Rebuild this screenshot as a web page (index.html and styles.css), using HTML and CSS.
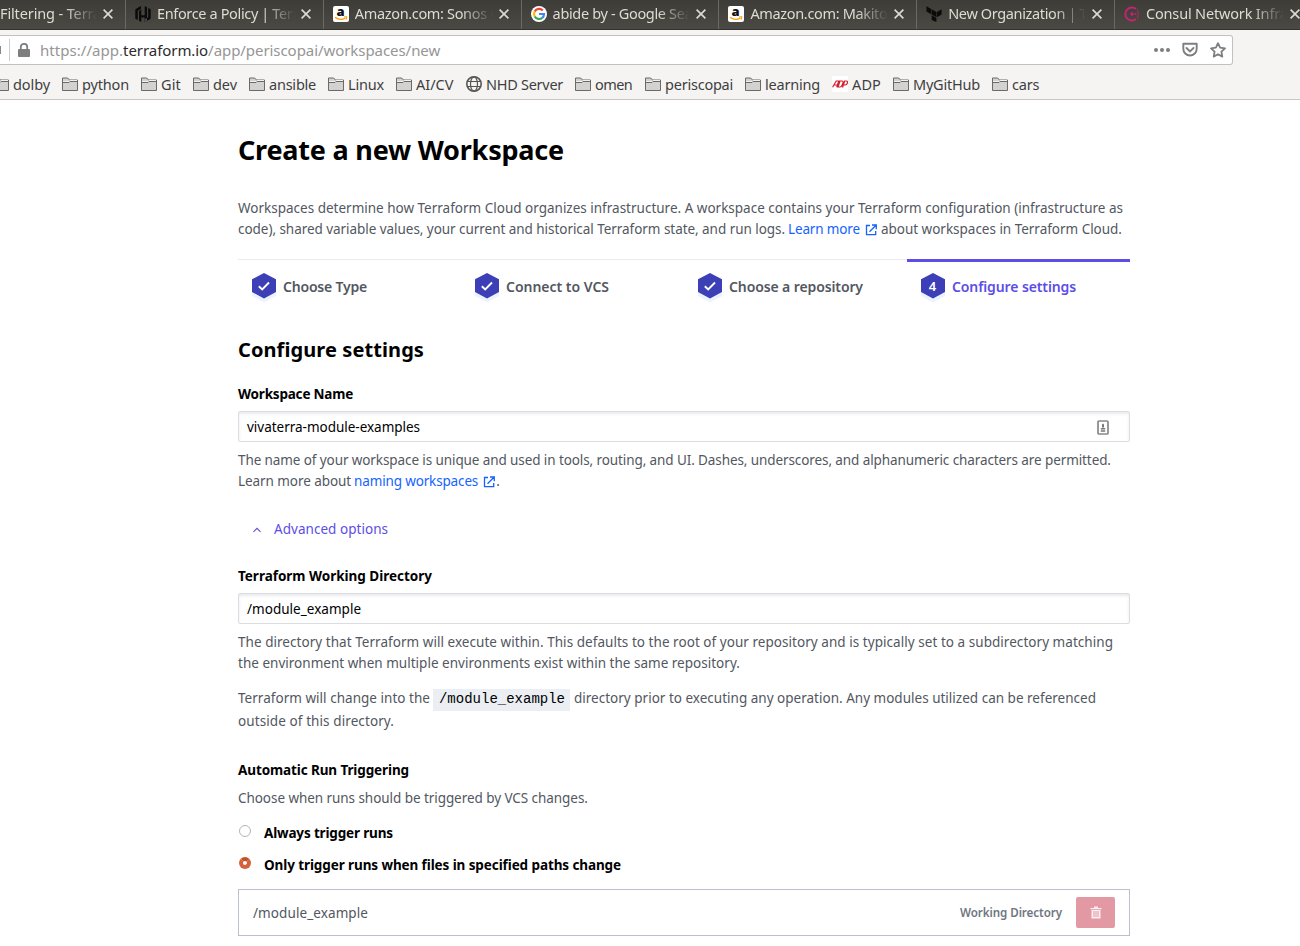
FILE: index.html
```html
<!DOCTYPE html>
<html lang="en">
<head>
<meta charset="utf-8">
<title>Create a new Workspace</title>
<link rel="stylesheet" href="styles.css">
</head>
<body>
<svg class="defs" width="0" height="0" aria-hidden="true">
  <symbol id="folder" viewBox="0 0 16 16"><path d="M.5 14.500v-12.500h5.200l1.800 2h8v10.500z" fill="#d3d2d1" stroke="#6a6a68"/><path d="M1 5.500h6l1-1h7" stroke="#f3f2f1" fill="none"/><path d="M1 6.500h6l1-1h7.500" stroke="#6a6a68" fill="none"/></symbol>
  <symbol id="close" viewBox="0 0 10 10"><path d="M.6.600l8.800 8.800M9.400.6L.6 9.400" stroke="#dfdbd2" stroke-width="1.600" fill="none"/></symbol>
  <symbol id="amazon" viewBox="0 0 16 16"><rect width="16" height="16" rx="2" fill="#fff"/><text x="3.600" y="10" font-family="Open Sans, sans-serif" font-weight="800" font-size="13" fill="#111">a</text><path d="M2 11.200q5.500 4 10.500.8" stroke="#f90" stroke-width="1.300" fill="none"/><path d="M11 11l3-.3-.8 2.800" stroke="#f90" stroke-width="1" fill="none"/></symbol>
  <symbol id="hex" viewBox="0 0 24 30"><path d="M12 4l12 6.300v12.700L12 29.500 0 23v-12.700z" fill="#edf3fd"/><path d="M12 0l12 6.300v12.700L12 25.500 0 19v-12.700z" fill="#3d3fb6"/></symbol>
  <symbol id="check" viewBox="0 0 24 30"><use href="#hex" width="24" height="30"/><path d="M6.800 13.200l3.400 3.300 6.800-7" stroke="#fff" stroke-width="1.900" fill="none"/></symbol>
  <symbol id="ext" viewBox="0 0 12 12"><path d="M5 1.500H1.500v9.200h9.200V7M7 1h4.300v4.300M11 1.200L4.500 7.700" fill="none" stroke="#1563ff" stroke-width="1.300"/></symbol>
</svg>
<div class="tabs">
  <div class="tab first"><div class="tt tr-n13">Filtering - Terraform</div><svg class="x"><use href="#close"/></svg></div>
  <div class="tab"><svg class="fav" viewBox="0 0 16 16"><path d="M6 0L.3 3.300v9.400l2.500 1.400V4.800L6 3zM7 0v3.400L6.300 4v5.200h3.400V0l2.300 1.300v13.400L9.700 16v-4.500H6.300V16L4 14.700V5l3-1.700zM10 16l5.700-3.300V3.300l-2.500-1.400v9.300L10 13z" fill="#0b0b0b"/></svg><div class="tt tr-n36">Enforce a Policy | Terraform</div><svg class="x"><use href="#close"/></svg></div>
  <div class="tab"><svg class="fav"><use href="#amazon"/></svg><div class="tt tr-n34">Amazon.com: Sonos One</div><svg class="x"><use href="#close"/></svg></div>
  <div class="tab"><svg class="fav" viewBox="0 0 16 16"><circle cx="8" cy="8" r="8" fill="#fff"/><g fill="none" stroke-width="2.200"><path d="M11.800 4.600A5 5 0 0 0 3.700 5.500" stroke="#ea4335"/><path d="M3.700 5.500a5 5 0 0 0 0 5" stroke="#fbbc05"/><path d="M3.700 10.500a5 5 0 0 0 7.600 1.300" stroke="#34a853"/><path d="M11.300 11.800A5 5 0 0 0 13 8H8" stroke="#4285f4"/></g></svg><div class="tt tr-n34">abide by - Google Search</div><svg class="x"><use href="#close"/></svg></div>
  <div class="tab"><svg class="fav"><use href="#amazon"/></svg><div class="tt tr-n34">Amazon.com: Makito</div><svg class="x"><use href="#close"/></svg></div>
  <div class="tab"><svg class="fav" viewBox="0 0 16 16"><path d="M.500.300l4.700 2.700v5.300L.500 5.600zM5.700 3.300l4.700 2.700v5.300L5.700 8.600zM15.600 3.300l-4.700 2.700v5.300l4.700-2.700zM5.700 9.200l4.700 2.700V16L5.700 14z" fill="#0b0b0b"/></svg><div class="tt tr-n36">New Organization | Terraform</div><svg class="x"><use href="#close"/></svg></div>
  <div class="tab"><svg class="fav" viewBox="0 0 16 16"><path d="M12 3A6.500 6.500 0 1 0 12 13" fill="none" stroke="#ca2171" stroke-width="1.900"/><g fill="#ca2171"><circle cx="8" cy="8" r="1.700"/><circle cx="11.500" cy="8" r="1"/><circle cx="14" cy="6" r=".8"/><circle cx="14.500" cy="8" r=".8"/><circle cx="14" cy="10" r=".8"/><circle cx="13.500" cy="4" r=".7"/><circle cx="13.500" cy="12" r=".7"/></g></svg><div class="tt tr-n17">Consul Network Infrastructure</div><svg class="x"><use href="#close"/></svg></div>
</div>
<div class="nav">
  <div class="urlbar">
    <span class="shield"></span><span class="sep"></span>
    <svg class="lock" viewBox="0 0 12 14"><path d="M2.800 6V4a3.200 3.200 0 0 1 6.400 0v2" fill="none" stroke="#7e7e7e" stroke-width="1.800"/><rect y="6" width="12" height="8" rx="1" fill="#7e7e7e"/></svg>
    <div class="url"><span class="tr-p4">https://app.</span><span class="host">terraform.io</span><span class="tr-n6">/app/periscopai/workspaces/new</span></div>
    <svg class="acts" viewBox="0 0 74 18"><g fill="#7e7e7e"><circle cx="3" cy="9" r="2"/><circle cx="9" cy="9" r="2"/><circle cx="15" cy="9" r="2"/></g><g fill="none" stroke="#7e7e7e" stroke-width="1.900"><path d="M30.300 2.800h13.400v5a6.700 6.700 0 0 1-13.400 0z" stroke-linejoin="round"/><path d="M33.500 7l3.500 3.400L40.500 7" stroke-linecap="round"/><path d="M65 2.200l2.100 4.500 4.900.6-3.600 3.400.9 4.900-4.300-2.400-4.300 2.400.9-4.900L58 7.300l4.900-.6z" stroke-width="1.800" stroke-linejoin="round"/></g></svg>
  </div>
</div>
<div class="bookmarks">
  <div class="bm"><svg><use href="#folder"/></svg><span class="tr-n10">dolby</span></div>
  <div class="bm"><svg><use href="#folder"/></svg><span class="tr-n16">python</span></div>
  <div class="bm"><svg><use href="#folder"/></svg><span class="tr-p15">Git</span></div>
  <div class="bm"><svg><use href="#folder"/></svg><span class="tr-n6">dev</span></div>
  <div class="bm"><svg><use href="#folder"/></svg><span class="tr-n22">ansible</span></div>
  <div class="bm"><svg><use href="#folder"/></svg><span class="tr-n20">Linux</span></div>
  <div class="bm"><svg><use href="#folder"/></svg><span class="tr-n2">AI/CV</span></div>
  <div class="bm"><svg viewBox="0 0 16 16"><g fill="none" stroke="#555" stroke-width="1.200"><circle cx="8" cy="8" r="7.200" stroke-width="1.600"/><ellipse cx="8" cy="8" rx="3.500" ry="7.200"/><path d="M1.500 5.500h13M1.500 10.500h13"/></g></svg><span class="tr-n28">NHD Server</span></div>
  <div class="bm"><svg><use href="#folder"/></svg><span class="tr-n60">omen</span></div>
  <div class="bm"><svg><use href="#folder"/></svg><span class="tr-n22">periscopai</span></div>
  <div class="bm"><svg><use href="#folder"/></svg><span class="tr-n20">learning</span></div>
  <div class="bm"><svg viewBox="0 0 16 16"><rect width="16" height="16" fill="#fff"/><g fill="none" stroke="#d0202e" stroke-width="1.200"><path d="M.6 11.200L4.200 5h2.600L4.700 11.200M2.300 9h3M6 11l2-6h2q1.500 0 1 1.700l-.9 2.600Q9.500 11 8 11zM10.500 11.500L12.700 5h1.700q1.600 0 1 2t-2.200 2h-1.600"/></g></svg><span class="tr-p12">ADP</span></div>
  <div class="bm"><svg><use href="#folder"/></svg><span class="tr-n22">MyGitHub</span></div>
  <div class="bm"><svg><use href="#folder"/></svg><span class="tr-n22">cars</span></div>
</div>
<main class="page">
  <h1>Create a new Workspace</h1>
  <div class="intro">
    <div class="line"><span>Workspaces determine how Terraform Cloud organizes infrastructure. A workspace contains your Terraform configuration (infrastructure as</span></div>
    <div class="line"><span class="tr-n5">code), shared variable values, your current and historical Terraform state, and run logs.</span><a class="tr-n15">Learn more</a><svg class="ext"><use href="#ext"/></svg><span class="tr-n2">about workspaces in Terraform Cloud.</span></div>
  </div>
  <div class="steps">
    <div class="step"><svg class="hex"><use href="#check"/></svg><span class="tr-n20">Choose Type</span></div>
    <div class="step"><svg class="hex"><use href="#check"/></svg><span class="tr-n2">Connect to VCS</span></div>
    <div class="step"><svg class="hex"><use href="#check"/></svg><span class="tr-n11">Choose a repository</span></div>
    <div class="step active"><svg class="hex"><use href="#hex"/><text x="11.500" y="17.500" text-anchor="middle">4</text></svg><span class="tr-n11">Configure settings</span></div>
  </div>
  <h2>Configure settings</h2>
  <div class="label tr-n20">Workspace Name</div>
  <div class="field"><span class="tr-n2">vivaterra-module-examples</span><svg class="key" viewBox="0 0 12 16"><rect x="1" y="1" width="10" height="13" rx="1" fill="#fff" stroke="#888" stroke-width="1.700"/><path d="M6 3.500l1 1v3H5v-3zM3.800 8h4.400v1.500H3.800zM3.800 10.300h4.400v1.500H3.800z" fill="#777"/></svg></div>
  <div class="help">
    <div class="line"><span class="tr-n10">The name of your workspace is unique and used in tools, routing, and UI. Dashes, underscores, and alphanumeric characters are permitted.</span></div>
    <div class="line"><span class="tr-n7">Learn more about</span><a class="tr-n15">naming workspaces</a><svg class="ext"><use href="#ext"/></svg><span class="dot">.</span></div>
  </div>
  <div class="advanced"><svg viewBox="0 0 10 10"><path d="M1.500 6.800L5 3.300l3.500 3.500" fill="none" stroke="#5c4ee5" stroke-width="1.100"/></svg><span class="tr-p4">Advanced options</span></div>
  <div class="label tr-n2">Terraform Working Directory</div>
  <div class="field"><span class="tr-p3">/module_example</span></div>
  <div class="help">
    <div class="line"><span class="tr-p4">The directory that Terraform will execute within. This defaults to the root of your repository and is typically set to a subdirectory matching</span></div>
    <div class="line"><span class="tr-p2">the environment when multiple environments exist within the same repository.</span></div>
  </div>
  <div class="note">
    <div class="line"><span class="tr-p3">Terraform will change into the</span><code>/module_example</code><span class="tr-p1">directory prior to executing any operation. Any modules utilized can be referenced</span></div>
    <div class="line"><span class="tr-p9">outside of this directory.</span></div>
  </div>
  <div class="label tr-n11">Automatic Run Triggering</div>
  <div class="line choose"><span class="tr-n6">Choose when runs should be triggered by VCS changes.</span></div>
  <div class="opt"><i class="radio"></i><span class="tr-n16">Always trigger runs</span></div>
  <div class="opt"><i class="radio on"></i><span class="tr-n10">Only trigger runs when files in specified paths change</span></div>
  <div class="path"><span class="dir tr-p9">/module_example</span><b class="wd">Working Directory</b><button class="del"><svg viewBox="0 0 12 13"><path d="M1.500 4h9v8.500h-9zM.5 2h11v1.300H.5zM4 .5h4V2H4z" fill="#fbeef0"/><path d="M4 5v6M6 5v6M8 5v6" stroke="#e299a3"/></svg></button></div>
</main>
</body>
</html>
```
FILE: styles.css
```css
* { box-sizing: border-box; }
body { margin: 0; width: 1300px; height: 946px; overflow: hidden; background: #fff; font: 13.5px/21px "Noto Sans", sans-serif; color: #525761; }
.defs { position: absolute; }
/* tracking, in hundredths of a pixel */
.tr-n60 { letter-spacing: -.6px; }
.tr-n36 { letter-spacing: -.36px; }
.tr-n34 { letter-spacing: -.34px; }
.tr-n28 { letter-spacing: -.275px; }
.tr-n22 { letter-spacing: -.225px; }
.tr-n20 { letter-spacing: -.2px; }
.tr-n17 { letter-spacing: -.17px; }
.tr-n16 { letter-spacing: -.16px; }
.tr-n15 { letter-spacing: -.15px; }
.tr-n13 { letter-spacing: -.13px; }
.tr-n11 { letter-spacing: -.11px; }
.tr-n10 { letter-spacing: -.097px; }
.tr-n7 { letter-spacing: -.07px; }
.tr-n6 { letter-spacing: -.06px; }
.tr-n5 { letter-spacing: -.047px; }
.tr-n2 { letter-spacing: -.018px; }
.tr-p1 { letter-spacing: .009px; }
.tr-p2 { letter-spacing: .017px; }
.tr-p3 { letter-spacing: .029px; }
.tr-p4 { letter-spacing: .044px; }
.tr-p9 { letter-spacing: .095px; }
.tr-p12 { letter-spacing: .12px; }
.tr-p15 { letter-spacing: .15px; }

.tabs { display: flex; height: 30px; width: 1330px; background: linear-gradient(#3d3c37, #4a4943); border-bottom: 1px solid #33322e; font-size: 14.5px; color: #dfdbd2; }
.tab { flex: none; width: 197.8px; padding: 0 12px 2px 9px; border-left: 1px solid #6b6963; display: flex; align-items: center; }
.tab.first { width: 125px; padding-left: 0; border: 0; }
.fav { width: 16px; height: 16px; margin-right: 6px; flex: none; }
.tt { flex: 1; overflow: hidden; white-space: nowrap; mask-image: linear-gradient(to left, transparent, #000 32px); }
.x { width: 10px; height: 10px; flex: none; margin-left: 6px; }

.nav { height: 39px; padding-top: 5px; background: #f5f4f3; }
.urlbar { width: 1233px; height: 30px; border: 1px solid #c3c1bf; border-left: 0; border-radius: 0 3px 3px 0; background: #fff; display: flex; align-items: center; font-size: 15px; color: #969696; }
.shield { width: 1px; height: 8px; background: #888; }
.sep { width: 1px; height: 22px; background: #ccc; margin: 0 8px; }
.lock { width: 12px; height: 14px; }
.url { display: flex; flex: 1; margin-left: 10px; }
.host { color: #2c2c2c; letter-spacing: -.068px; }
.acts { width: 74px; height: 18px; margin-right: 5px; }

.bookmarks { display: grid; grid-template-columns: 69px 79px 52px 56px 79px 68px 70px 109px 70px 100px 87px 61px 99px 60px; height: 31px; background: #f5f4f3; border-bottom: 1px solid #c9c7c5; font-size: 14.5px; color: #3f3f3f; }
.bm { display: flex; align-items: center; gap: 4px; margin-left: -7px; white-space: nowrap; }
.bm svg { width: 16px; height: 16px; flex: none; }

.page { width: 892px; margin-left: 238px; }
h1 { margin: 32px 0 30px; font-size: 27px; line-height: 36px; height: 36px; color: #000; letter-spacing: -.21px; }
.line { display: flex; height: 21px; white-space: nowrap; }
.line span, .line a { flex: none; }
a { color: #1563ff; margin-left: 3px; }
.ext { width: 12px; height: 12px; margin: 5px 4px 0 5px; flex: none; }
.steps { display: grid; grid-template-columns: repeat(4, 223px); height: 44px; margin-top: 19px; font-size: 14px; font-weight: 600; }
.step { border-top: 1px solid #ebebed; padding: 13px 0 0 14px; display: flex; line-height: 28px; }
.step.active { border-top: 3px solid #5c4ee5; padding-top: 11px; color: #5c4ee5; }
.hex { width: 24px; height: 30px; margin-right: 7px; flex: none; }
.hex text { font: 600 13px "Noto Sans", sans-serif; fill: #fff; }
h2 { margin: 33px 0 20px; font-size: 20px; line-height: 28px; height: 28px; color: #000; letter-spacing: .09px; }
.label { height: 20px; line-height: 20px; font-weight: 700; color: #000; margin-bottom: 7px; }
.field { height: 31px; border: 1px solid #dbdde3; border-radius: 2px; box-shadow: inset 0 2px 3px rgba(90,95,110,.13); padding: 2px 20px 0 8px; display: flex; align-items: center; justify-content: space-between; color: #000; }
.key { width: 12px; height: 16px; }
.help { margin: 8px 0 0; }
.dot { margin-left: -3px; }
.advanced { display: flex; align-items: center; height: 21px; margin: 27px 0 26px 14px; color: #5c4ee5; }
.advanced svg { width: 10px; height: 10px; margin-right: 12px; }
.note { margin: 14px 0 28px; }
.note .line:first-child { height: 23px; }
code { font: 14px/20px "Liberation Mono", monospace; background: #ebeef2; color: #000; width: 137px; height: 22px; margin: 1px 4px 0 3px; padding: 0 6px; flex: none; }
.choose { margin-top: 8px; }
.opt { display: flex; height: 20px; line-height: 20px; color: #000; font-weight: 700; margin-top: 12px; }
.choose + .opt { margin-top: 14px; }
.radio { width: 12px; height: 12px; margin: 2px 13px 0 1px; border: 1px solid #b5b5b5; border-radius: 50%; background: #fff; }
.radio.on { border: 4px solid #d5623a; border-top-color: #c4502a; }
.path { display: flex; align-items: center; height: 47px; margin-top: 14px; padding: 0 14px; border: 1px solid #bac1cc; }
.dir { padding-top: 2px; }
.wd { margin-left: auto; font-size: 11.6px; font-weight: 600; color: #6f7682; letter-spacing: -.07px; }
.del { width: 39px; height: 31px; margin-left: 14px; border: 0; border-radius: 2px; background: #e299a3; padding: 0; display: flex; align-items: center; justify-content: center; }
.del svg { width: 12px; height: 13px; }
```
